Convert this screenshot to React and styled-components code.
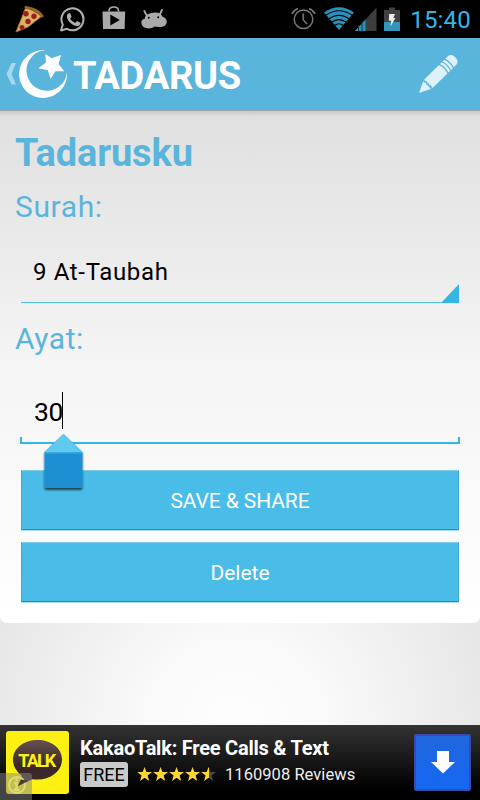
import React, { useState } from "react";
import styled, { createGlobalStyle } from "styled-components";

const GlobalStyle = createGlobalStyle`
    body {
        margin: 0;
        background: black;
        font-family: Roboto, "Noto Sans", sans-serif;
    }
    * { box-sizing: border-box; }
`;

const Screen = styled.div`
    width: 480px;
    height: 800px;
    display: flex;
    flex-direction: column;
    overflow: hidden;
    background: radial-gradient(circle 255px at 236px 730px, #fefefe 0%, #fafafa 35%, #e7e7e7 100%);
`;

const Text = styled.span`
    font-size: ${(p) => p.$size}px;
    line-height: ${(p) => p.$line || 30}px;
    font-weight: ${(p) => (p.$bold ? 700 : 400)};
    letter-spacing: ${(p) => p.$spacing || 0}px;
    color: ${(p) => p.$color || "#5ab5dc"};
    white-space: nowrap;
`;

const StatusBar = styled.div`
    height: 38px;
    flex: none;
    display: flex;
    align-items: center;
    justify-content: space-between;
    padding: 0 9px 0 14px;
    background: black;
`;

const IconGroup = styled.div`
    display: flex;
    align-items: center;
    gap: ${(p) => p.$gap || 0}px;

    svg { display: block; flex: none; }
`;

const Gap = styled.span`
    width: ${(p) => p.$width}px;
`;

const Clock = styled(Text)`
    margin-left: 10px;
    padding-top: 1px;
`;

const Header = styled.header`
    height: 72px;
    flex: none;
    display: flex;
    align-items: center;
    justify-content: space-between;
    padding: 0 20px 0 6px;
    background: #5ab5dc;
`;

const Logo = styled.h1`
    margin: 0 0 0 5px;
    padding-top: 4px;
    display: flex;
`;

const Card = styled.main`
    height: 513px;
    flex: none;
    display: flex;
    flex-direction: column;
    border-top: 1px solid #9fa6a9;
    border-radius: 0 0 7px 7px;
    background:
        linear-gradient(rgba(0, 0, 0, 0.1), rgba(0, 0, 0, 0) 6px),
        linear-gradient(#e0e0e0, #ebebeb 28%, #f5f5f5 50%, #ffffff);
`;

const Title = styled.h2`
    margin: 22px 0 0 15px;
    height: 40px;
    display: flex;
`;

const Label = styled.label`
    margin: ${(p) => p.$top}px 0 0 15px;
    height: 36px;
    display: flex;
`;

const Spinner = styled.div`
    margin: 17px 21px 0;
    height: 61px;
    display: flex;
    justify-content: space-between;
    align-items: flex-end;
    padding-left: 12px;
    border-bottom: 1px solid #4fc0e8;

    svg { display: block; margin-bottom: -1px; }
`;

const SpinnerValue = styled(Text)`
    align-self: flex-start;
    margin-top: 15px;
`;

const Field = styled.div`
    position: relative;
    margin: 27px 20px 0;
    height: 60px;
    display: flex;
    align-items: flex-start;
    padding: 8px 0 0 14px;
    border-bottom: 2px solid #33b5e5;

    &::before, &::after {
        content: "";
        position: absolute;
        bottom: 0;
        width: 2px;
        height: 5px;
        background: #33b5e5;
    }
    &::before { left: 0; }
    &::after { right: 0; }
`;

const Caret = styled.span`
    width: 1px;
    height: 37px;
    margin-left: -1px;
    background: black;
`;

/* drag handle hanging below the caret */
const Handle = styled.svg`
    position: absolute;
    left: 18px;
    top: 47px;
    z-index: 1;
`;

const Button = styled.button`
    margin: ${(p) => p.$top}px 21px 0;
    height: 60px;
    flex: none;
    display: flex;
    align-items: center;
    justify-content: center;
    padding: 2px 0 0;
    border: 1px solid #3ba9d3;
    border-top-color: #80cdeb;
    border-bottom-color: #278cb4;
    border-radius: 1px;
    box-shadow: 0 1px 0 #a9dcef;
    background: #4abce8;
    font-family: inherit;
`;

const Ad = styled.aside`
    height: 75px;
    flex: none;
    margin-top: auto;
    display: flex;
    padding-left: 6px;
    background: linear-gradient(#333333, #000000 85%);
`;

const AppTile = styled.div`
    position: relative;
    width: 63px;
    height: 63px;
    margin-top: 6px;
    border-radius: 3px;
    background: #fff014;
`;

const TileArt = styled.svg`
    display: block;
`;

const InfoBadge = styled.svg`
    position: absolute;
    left: -6px;
    top: 42px;
`;

const AdBody = styled.div`
    margin: 10px 0 0 11px;
    flex: 1;
    display: flex;
    flex-direction: column;
`;

const AdRow = styled.div`
    display: flex;
    align-items: center;
    margin-top: 1px;
`;

const Free = styled.span`
    width: 48px;
    height: 25px;
    display: flex;
    align-items: center;
    justify-content: center;
    border-radius: 3px;
    background: #cacaca;
`;

const Stars = styled.svg`
    margin: 0 8px 0 9px;
`;

const Download = styled.div`
    width: 57px;
    height: 57px;
    margin: 9px 9px 0 0;
    padding-bottom: 2px;
    display: flex;
    align-items: center;
    justify-content: center;
    border: 2px solid #3d47ac;
    border-radius: 2px;
    background: linear-gradient(#2066df, #1468f2);
`;

const Pizza = () => (
    <svg width="31" height="28" viewBox="14 5 31 28">
        <path d="M26 7L42 16 28 27 16 32Z" fill="#d9b467" stroke="#a37332" strokeWidth="1" />
        <path d="M26 7.5Q37 9 42 16" fill="none" stroke="#9b6426" strokeWidth="3" strokeLinecap="round" />
        <g fill="#a01c20">
            <circle cx="26" cy="13.8" r="2.7" />
            <circle cx="34" cy="16.3" r="2.7" />
            <circle cx="28" cy="21.5" r="2.7" />
            <circle cx="22" cy="27.5" r="2.5" />
        </g>
    </svg>
);

const WhatsApp = () => (
    <svg width="27" height="26" viewBox="60 6 27 26">
        <path d="M61 30.5L62.8 24.5A11 11 0 1 1 67 28.8Z" fill="none" stroke="#b0b0b0" strokeWidth="2" strokeLinejoin="round" />
        <path d="M67.3 14.5Q68.5 12.5 70 13L71.6 16.6 70.2 18.7Q71.8 21.9 75.3 23L77 21 80.5 22.7Q80.5 25.5 77.5 26 73.5 26.2 69.5 22 66 18 67.3 14.5Z" fill="#b0b0b0" />
    </svg>
);

const PlayBag = () => (
    <svg width="24" height="26" viewBox="102 6 24 26">
        <path d="M102.5 11.5H125.2L124.6 29H103Z" fill="#aaa" />
        <path d="M109 11.5V10.5Q109.5 7 113.8 7T118.5 10.5V11.5" fill="none" stroke="#aaa" strokeWidth="1.6" />
        <path d="M110.3 14.5V25.5L119.8 20Z" fill="black" />
    </svg>
);

const Bean = () => (
    <svg width="28" height="22" viewBox="140 8 28 22">
        <path d="M143.3 11L146.3 16.5M161 10L158.5 15" stroke="#aaa" strokeWidth="1.8" strokeLinecap="round" />
        <path d="M143.5 19Q144 13.5 152 12.7 160 12 161.3 16.5 166 18 165.8 22.5 164.5 27.3 158 27 155 26.8 153.5 26.5 151 28.8 146 28.3 140 27 140.3 22 141 19 143.5 19Z" fill="#aaa" />
        <circle cx="147.8" cy="17.7" r="1" fill="black" />
        <circle cx="157.2" cy="17.2" r="1" fill="black" />
    </svg>
);

const Alarm = () => (
    <svg width="26" height="26" viewBox="291 7 26 26">
        <g fill="none" stroke="#777" strokeWidth="1.5">
            <circle cx="304.5" cy="20.3" r="9.3" />
            <path d="M304.2 14.5V20.8L308 25M293 15Q294.5 11.3 299 9.5M310 9.5Q314.5 11.3 316 15" />
        </g>
    </svg>
);

const Wifi = () => (
    <svg width="32" height="24" viewBox="324 7 32 24">
        <path d="M325 12.5Q340 2 355 12.5L340 30Z" fill="#2a91bb" />
        <g fill="none" stroke="black" strokeWidth="1.1">
            <path d="M326.5 15.5Q340 6 353.5 15.5" />
            <path d="M329.5 19Q340 11.5 350.5 19" />
            <path d="M332.5 22.3Q340 17 347.5 22.3" />
            <path d="M335.5 25.5Q340 22 344.5 25.5" />
        </g>
    </svg>
);

const Signal = () => (
    <svg width="22" height="24" viewBox="353.5 6 22 24">
        <path d="M353.5 30L375 6.5V30Z" fill="#3d3d3d" />
        <path d="M353.5 30L364 18.5V30Z" fill="#2a91bb" />
        <path d="M357 24V30M360.5 20V30" stroke="#12384a" strokeWidth="1" />
    </svg>
);

const Battery = () => (
    <svg width="16" height="24" viewBox="383 6 16 24">
        <path d="M383 9H388V6.5H394V9H399V30H383Z" fill="#414141" />
        <path d="M383 21H399V30H383Z" fill="#3596bd" />
        <path d="M388.2 13H394L392.3 17H394.5L389.5 25.5 390.2 19.7H387.8Z" fill="#eee" />
    </svg>
);

const Crescent = () => (
    <svg width="50" height="50" viewBox="18 49 50 50">
        <path d="M45.5 50.2A24 24 0 1 0 67 72A20.3 20.3 0 1 1 45.5 50.2Z" fill="white" />
        <path d="M45.3 54L51.8 58.2 61 55 58.5 64 64.3 71.2 55.3 71.2 50.7 79 47.8 70.2 38.3 68.2 46 62.6Z" fill="white" />
    </svg>
);

const Pencil = () => (
    <svg width="42" height="42" viewBox="418 53 42 42">
        <g transform="translate(419 93) rotate(-44.5)" fill="#def1fa">
            <path d="M0 0L11.5-5.5Q10-3.5 12.3-2.5 9.8-1 12.3 0 9.8 1.5 12.3 2.5 10 4 12 5.7Z" />
            <path d="M13.2-6H34Q36 0 34 6H13.8Q12.3 5 14 3.3 11.8 1.7 14 .2 11.8-1 14-2.7 12-4.2 13.2-6Z" />
            <path d="M35.3-6H37.8Q39.8 0 37.8 6H35.3Q37.3 0 35.3-6ZM39-6H41.5Q43.5 0 41.5 6H39Q41 0 39-6ZM42.7-6H47Q51-5 51 0T47 6H42.7Q44.7 0 42.7-6Z" />
        </g>
    </svg>
);

const starPoints = "6.5,0 8.4,5 14,5.1 9.6,8.5 11.2,14 6.6,10.8 2.1,14 3.6,8.5 -0.8,5.1 4.7,5";

const App = () => {
    const [ayat] = useState("30");
    return (
    <Screen>
        <GlobalStyle />
        <StatusBar>
            <IconGroup $gap={15}>
                <Pizza />
                <WhatsApp />
                <PlayBag />
                <Bean />
            </IconGroup>
            <IconGroup>
                <Alarm />
                <Gap $width={7} />
                <Wifi />
                <Signal />
                <Gap $width={7} />
                <Battery />
                <Clock $size={24} $spacing={0.2} $color="#33b5e5">15:40</Clock>
            </IconGroup>
        </StatusBar>
        <Header>
            <IconGroup>
                <svg width="12" height="24" viewBox="6 62 12 24">
                    <path d="M11.5 63H16L11.5 74 16 84.5H11.5L6.5 74Z" fill="#a5d7ed" />
                </svg>
                <Crescent />
                <Logo><Text $size={38} $line={44} $spacing={-0.25} $bold $color="white">TADARUS</Text></Logo>
            </IconGroup>
            <Pencil />
        </Header>
        <Card>
            <Title><Text $size={38} $line={40} $spacing={-0.15} $bold>Tadarusku</Text></Title>
            <Label $top={16}><Text $size={30} $line={36} $spacing={0.6}>Surah:</Text></Label>
            <Spinner>
                <SpinnerValue $size={24} $spacing={0.65} $color="black">9 At-Taubah</SpinnerValue>
                <svg width="18" height="19"><path d="M0 19L18 0V19Z" fill="#33b5e5" /></svg>
            </Spinner>
            <Label $top={18}><Text $size={30} $line={36} $spacing={0.5}>Ayat:</Text></Label>
            <Field>
                <Text $size={26.5} $line={40} $spacing={-0.3} $color="black">{ayat}</Text>
                <Caret />
                <Handle width="50" height="64" viewBox="38 431 50 64">
                    <defs>
                        <filter id="drop" x="-20%" y="-20%" width="140%" height="150%">
                            <feDropShadow dx="0" dy="2" stdDeviation="1.3" floodOpacity="0.65" />
                        </filter>
                    </defs>
                    <g filter="url(#drop)">
                        <path d="M44.5 452L63.5 434 82.5 452V486Q82.5 488 80.5 488H46.5Q44.5 488 44.5 486Z" fill="#1e90d2" />
                        <path d="M44.5 452L63.5 434 82.5 452Z" fill="#60c9ed" />
                        <path d="M44.5 452H82.5V453.5H44.5Z" fill="#35acdf" />
                    </g>
                </Handle>
            </Field>
            <Button $top={26}><Text $size={21} $spacing={-0.1} $color="white">SAVE &amp; SHARE</Text></Button>
            <Button $top={12}><Text $size={21} $color="white">Delete</Text></Button>
        </Card>
        <Ad>
            <AppTile>
                <TileArt width="63" height="63" viewBox="6 731 63 63">
                    <defs>
                        <linearGradient id="bubble" x2="0" y2="1">
                            <stop offset="0" stopColor="#63504f" />
                            <stop offset="0.6" stopColor="#3a2626" />
                            <stop offset="1" stopColor="#3f2b2b" />
                        </linearGradient>
                    </defs>
                    <path d="M37.5 740C51 740 62 748 62 759.5S51 779.5 37.5 779.5Q35 779.5 32.5 779.2L18 786 22 776Q13 769 13 760C13 748 24 740 37.5 740Z" fill="url(#bubble)" />
                    <text x="37.3" y="767.3" textAnchor="middle" textLength="38" fontSize="18" fontWeight="700" fill="#fff014">TALK</text>
                </TileArt>
                <InfoBadge width="32" height="27" viewBox="0 773 32 27">
                    <path d="M0 773H29Q32 773 32 776V800H0Z" fill="#888" fillOpacity="0.5" />
                    <circle cx="17" cy="785" r="8" fill="none" stroke="#dedb70" strokeWidth="2.2" />
                    <path d="M16.5 778.5V781M14 783.3H16.5V790M13.5 790H19.5" fill="none" stroke="#dedb70" strokeWidth="2.4" />
                    <path d="M18 786L21.5 779.5 28 781Z" fill="#4a3a3a" />
                </InfoBadge>
            </AppTile>
            <AdBody>
                <Text $size={20} $line={26} $spacing={-0.23} $bold $color="white">KakaoTalk: Free Calls &amp; Text</Text>
                <AdRow>
                    <Free><Text $size={18} $line={24} $color="black">FREE</Text></Free>
                    <Stars width="80" height="15" viewBox="-1 0 80 15">
                        <defs>
                            <linearGradient id="half">
                                <stop offset="50%" stopColor="#fdd835" />
                                <stop offset="50%" stopColor="#4a4a4a" />
                            </linearGradient>
                        </defs>
                        {[0, 1, 2, 3, 4].map((i) => (
                            <polygon key={i} points={starPoints} transform={`translate(${i * 16} 0)`} fill={i < 4 ? "#fdd835" : "url(#half)"} />
                        ))}
                    </Stars>
                    <Text $size={16.5} $line={24} $spacing={0.05} $color="#eeeeee">1160908 Reviews</Text>
                </AdRow>
            </AdBody>
            <Download>
                <svg width="26" height="24" viewBox="0 0 26 24">
                    <path d="M7 1H19V12H25L13 23.5 1 12H7Z" fill="white" />
                </svg>
            </Download>
        </Ad>
    </Screen>
    );
};

export default App;
